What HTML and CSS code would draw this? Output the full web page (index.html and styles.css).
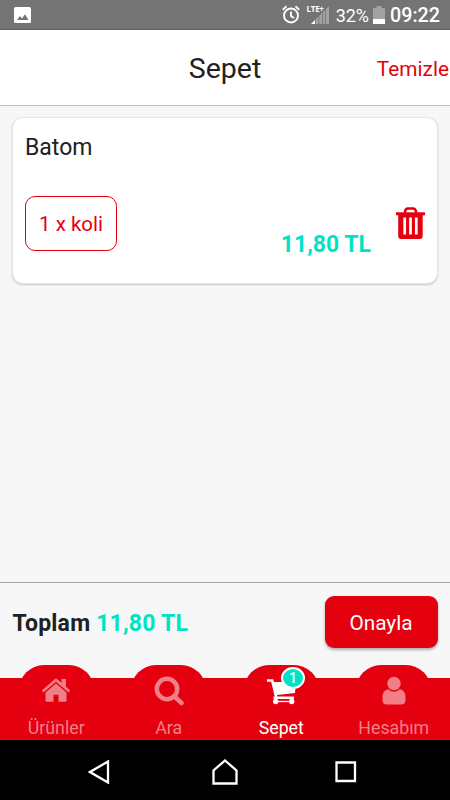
FILE: index.html
```
<!DOCTYPE html>
<html lang="tr">

<head>
    <meta charset="utf-8">
    <title>Sepet</title>
    <link rel="stylesheet" href="styles.css">
</head>

<body>
    <div class="statusbar">
        <svg class="photo" width="17" height="16" viewBox="0 0 17 16">
            <rect width="17" height="16" rx="1.5" fill="#fff" />
            <path d="M3 13l3-4 2 2.500 3-4.300L14.500 13z" fill="#747474" />
        </svg>
        <svg class="alarm" width="18" height="19" viewBox="0 0 18 19" fill="none" stroke="#fff" stroke-width="1.900">
            <circle cx="9" cy="10.500" r="7" />
            <path d="M9 6.500V11l3 2M.8 4.700L4.500 1.300M17.200 4.700L13.500 1.300" />
        </svg>
        <div class="signal">
            <span class="lte">LTE+</span>
            <svg width="18" height="18" viewBox="0 0 18 18">
                <path d="M0 18L4 14V18z" fill="#fff" />
                <path d="M4.700 13.300l2.800-2.800V18H4.700zM8.300 9.700l2.700-2.700V18H8.300zM11.800 6.200l2.400-2.400V18h-2.400zM15 3l3-3v18h-3z" fill="#a2a2a2" />
            </svg>
        </div>
        <span class="percent">32%</span>
        <svg class="battery" width="12" height="18" viewBox="0 0 12 18">
            <path d="M3.500 0h5v2H12v11H0V2h3.500z" fill="#a2a2a2" />
            <path d="M0 13h12v5H0z" fill="#fff" />
        </svg>
        <span class="clock">09:22</span>
    </div>

    <div class="header">
        <span></span>
        <h1>Sepet</h1>
        <a class="clear">Temizle</a>
    </div>

    <div class="content">
        <div class="card">
            <div class="name">Batom</div>
            <div class="row">
                <div class="amount">1 x koli</div>
                <div class="price">11,80 TL</div>
                <svg class="trash" width="29" height="33" viewBox="0 0 29 33">
                    <path d="M9 6V4.500Q9.500 1.400 12 1.400h5Q19.500 1.400 20 4.500V6" fill="none" stroke="#e4000f" stroke-width="2.500" />
                    <path d="M0 5.300h29v3H0z" fill="#e4000f" />
                    <path d="M2.200 8h24.500v21q0 3-3 3H5.200q-3 0-3-3z" fill="#e4000f" />
                    <path d="M8.700 10.500v17M14.500 10.500v17M20.300 10.500v17" stroke="#fff" stroke-width="2.700" />
                </svg>
            </div>
        </div>
    </div>

    <div class="total">
        <div class="sum">Toplam <span>11,80 TL</span></div>
        <div class="confirm">Onayla</div>
    </div>

    <div class="tabs">
        <div class="tab">
            <svg class="icon" width="32" height="32" viewBox="0 0 32 32" fill="#f17f87">
                <path d="M1.800 16.500L15 5q1-.8 2 0l4.500 3.800V5h4.500v7.700l4.200 3.800-1.700 2L16 7.800 3.500 18.500z" />
                <path d="M5.500 18.500L16 9.500l10.500 9v8q0 1.200-1.200 1.200h-6.800v-7h-5v7H6.700q-1.200 0-1.200-1.200z" />
            </svg>
            <span>Ürünler</span>
        </div>
        <div class="tab">
            <svg class="icon" width="32" height="32" viewBox="0 0 32 32" fill="none" stroke="#f17f87" stroke-width="4.500">
                <circle cx="14" cy="15" r="10.200" />
                <path d="M21.500 22.500L28.500 29" stroke-linecap="round" />
            </svg>
            <span>Ara</span>
        </div>
        <div class="tab active">
            <svg class="icon" width="32" height="32" viewBox="0 0 32 32">
                <path d="M2 6.500h5.200l4 16.500M8.500 23.700h20.500" fill="none" stroke="#fff" stroke-width="2.600" />
                <path d="M7.500 8h23.500l-1 11-20 2.200z" fill="#fff" />
                <circle cx="10.700" cy="27.500" r="2.700" fill="#fff" />
                <circle cx="26.700" cy="27.500" r="2.700" fill="#fff" />
                <path d="M10 27.500h17" stroke="#fff" stroke-width="1.300" />
            </svg>
            <div class="badge">1</div>
            <span>Sepet</span>
        </div>
        <div class="tab">
            <svg class="icon" width="32" height="32" viewBox="0 0 32 32" fill="#f17f87">
                <circle cx="16" cy="9.500" r="6.700" />
                <path d="M10.200 15.200q5.800 5 11.600 0 5.200.8 5.700 7.300v3.500q0 4.500-4.500 4.500H9q-4.500 0-4.500-4.500v-3.500q.5-6.500 5.700-7.300z" />
            </svg>
            <span>Hesabım</span>
        </div>
    </div>

    <div class="navbar">
        <svg width="22" height="24" viewBox="0 0 22 24">
            <path d="M20 1.500v21L2 12z" />
        </svg>
        <svg width="26" height="26" viewBox="0 0 26 26">
            <path d="M1.500 24.500V11.500L13 1.500l11.500 10v13z" />
        </svg>
        <svg width="22" height="22" viewBox="0 0 22 22">
            <path d="M1.500 1.500h18.500v18.500h-18.500z" />
        </svg>
    </div>
</body>

</html>
```

FILE: styles.css
```
* {
    box-sizing: border-box;
}

body {
    margin: 0;
    height: 800px;
    display: flex;
    flex-direction: column;
    font-family: Roboto, sans-serif;
    color: #212121;
    background: #f7f7f7;
    overflow: hidden;
}

.statusbar {
    height: 30px;
    flex: none;
    display: flex;
    align-items: center;
    padding: 0 10px 0 14px;
    background: #747474;
    border-bottom: 1px solid #636061;
    color: #fff;
}

.alarm {
    margin-left: auto;
}

.signal {
    display: flex;
    align-items: flex-end;
    margin: 0 7px 0 7px;
}

.signal svg {
    margin-left: -13px;
}

.lte {
    align-self: flex-start;
    margin-top: -2px;
    font-family: "Open Sans", sans-serif;
    font-size: 8px;
    font-weight: bold;
    letter-spacing: -0.3px;
    line-height: 9px;
}

.percent {
    padding-top: 2px;
    font-size: 18px;
}

.battery {
    margin: 0 5px 0 4px;
}

.clock {
    padding-top: 2px;
    font-size: 19.7px;
    font-weight: 500;
}

.header {
    height: 76px;
    flex: none;
    display: grid;
    grid-template-columns: 1fr auto 1fr;
    align-items: center;
    padding-top: 2px;
    background: #fff;
    border-bottom: 1px solid #c2c2c2;
}

.header h1 {
    margin: 0;
    font-size: 28.5px;
    font-weight: 400;
}

.clear {
    padding-right: 1px;
    text-align: right;
    font-size: 20.8px;
    color: #e4000f;
}

.content {
    flex: 1;
    padding: 11px 12px;
}

.card {
    height: 167px;
    padding: 17px 12px 0;
    background: #fff;
    border: 1px solid #e6e6e6;
    border-radius: 11px;
    box-shadow: 0 1px 2px rgba(0, 0, 0, 0.2);
}

.name {
    font-size: 23px;
    line-height: 26px;
}

.row {
    display: flex;
    margin-top: 35px;
}

.amount {
    width: 92px;
    height: 55px;
    border: 1px solid #e4000f;
    border-radius: 10px;
    font-size: 20.5px;
    line-height: 54px;
    text-align: center;
    color: #e4000f;
}

.price {
    margin: 34px 25px 0 auto;
    font-size: 23px;
    font-weight: bold;
    line-height: 29px;
    color: #00e3c5;
}

.trash {
    margin-top: 11px;
}

.total {
    height: 96px;
    flex: none;
    display: flex;
    justify-content: space-between;
    padding: 13px 12.5px 0;
    border-top: 1px solid #a5a5a5;
}

.sum {
    font-size: 23px;
    font-weight: bold;
    letter-spacing: 0.2px;
    line-height: 56px;
}

.sum span {
    color: #00e3c5;
}

.confirm {
    width: 113px;
    height: 52px;
    border-radius: 9px;
    background: #e4000f;
    box-shadow: 0 2px 3px rgba(0, 0, 0, 0.3);
    color: #fff;
    font-size: 20.8px;
    line-height: 54px;
    text-align: center;
}

.tabs {
    height: 62px;
    flex: none;
    display: grid;
    grid-template-columns: repeat(4, 1fr);
    background: #e4000f;
}

.tab {
    position: relative;
    display: flex;
    flex-direction: column;
    align-items: center;
    color: #f17f87;
    font-size: 17.8px;
}

/* rounded bump sticking out above the bar */
.tab::before {
    content: "";
    position: absolute;
    top: -13px;
    width: 75px;
    height: 50px;
    border-radius: 25px;
    background: #e4000f;
}

.tab span {
    position: relative;
    margin-top: 11px;
    line-height: 22px;
}

.icon {
    position: relative;
    margin-top: -4px;
}

.active {
    color: #fff;
}

.badge {
    position: absolute;
    top: -11px;
    left: 56px;
    width: 24px;
    height: 22px;
    border: 2px solid #fff;
    border-radius: 50%;
    background: #00e3c5;
    font-size: 14px;
    font-weight: 500;
    line-height: 19px;
    text-align: center;
}

.navbar {
    height: 60px;
    flex: none;
    display: flex;
    align-items: center;
    gap: 97px;
    padding: 4px 0 0 88px;
    background: #000;
}

.navbar svg {
    fill: none;
    stroke: #fff;
    stroke-width: 2.3;
}

.navbar svg:first-child {
    margin-right: 5px;
}
```
